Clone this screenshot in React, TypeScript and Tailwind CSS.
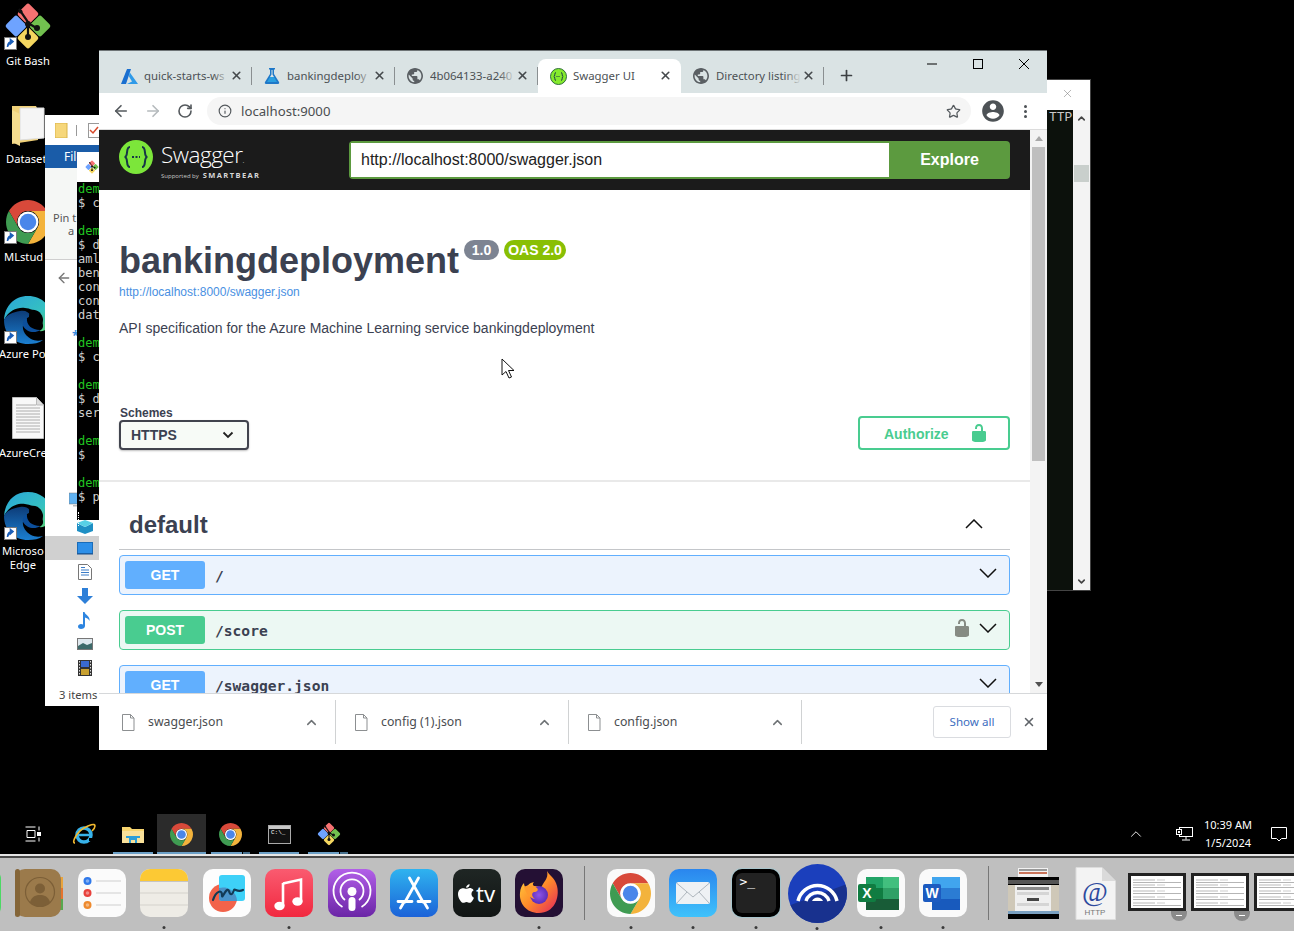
import React from "react";
import { ArrowLeft, ArrowRight, RotateCw, Info, Star, X, Plus, ChevronUp, ChevronDown } from "lucide-react";

const PUBLIC_D = "M12 2C6.48 2 2 6.48 2 12s4.48 10 10 10 10-4.48 10-10S17.52 2 12 2zm-1 17.93c-3.95-.49-7-3.85-7-7.93 0-.62.08-1.21.21-1.79L9 15v1c0 1.1.9 2 2 2v1.93zm6.9-2.54c-.26-.81-1-1.39-1.9-1.39h-1v-3c0-.55-.45-1-1-1H8v-2h2c.55 0 1-.45 1-1V7h2c1.1 0 2-.9 2-2v-.41c2.93 1.19 5 4.06 5 7.41 0 2.08-.8 3.97-2.1 5.39z";
const LOCK_D = "M15.8 8H14V5.6C14 2.703 12.665 1 10 1 7.334 1 6 2.703 6 5.6V6h2v-.801C8 3.754 8.797 3 10 3c1.203 0 2 .754 2 2.199V8H4c-.553 0-1 .646-1 1.199V17c0 .549.428 1.139.951 1.307l1.197.387C5.672 18.861 6.55 19 7.1 19h5.8c.549 0 1.428-.139 1.951-.307l1.196-.387c.524-.167.953-.757.953-1.306V9.199C17 8.646 16.352 8 15.8 8z";

function ChromeLogo({ size = 48 }: { size?: number }) {
  return (
    <svg width={size} height={size} viewBox="0 0 48 48">
      <path d="M24 12H44.78A24 24 0 0 0 3.22 12L13.6 30A12 12 0 0 1 24 12Z" fill="#d8493a" />
      <path d="M44.78 12A24 24 0 0 1 24 48L34.4 30A12 12 0 0 0 24 12Z" fill="#f3b33c" />
      <path d="M24 48A24 24 0 0 1 3.22 12L13.6 30A12 12 0 0 0 34.4 30Z" fill="#3f9b52" />
      <circle cx="24" cy="24" r="11.5" fill="#fff" />
      <circle cx="24" cy="24" r="9" fill="#4a86ea" />
    </svg>
  );
}

function GitLogo({ size = 48 }: { size?: number }) {
  return (
    <svg width={size} height={size} viewBox="0 0 48 48">
      <rect x="4" y="16" width="16" height="16" rx="2.5" transform="rotate(45 12 24)" fill="#6ea3ff" />
      <rect x="16" y="4" width="16" height="16" rx="2.5" transform="rotate(45 24 12)" fill="#f57272" />
      <rect x="28" y="16" width="16" height="16" rx="2.5" transform="rotate(45 36 24)" fill="#72c04f" />
      <rect x="16" y="28" width="16" height="16" rx="2.5" transform="rotate(45 24 36)" fill="#f4d65f" />
      <path d="M15 7L24 20L24 36M24 21L34 27" stroke="#111" strokeWidth="2.2" fill="none" />
      <circle cx="24" cy="22" r="3" fill="#111" />
      <circle cx="16.5" cy="9.5" r="2" fill="#111" />
      <circle cx="33" cy="26" r="3" fill="#111" />
      <circle cx="24" cy="35" r="3" fill="#111" />
    </svg>
  );
}

function EdgeLogo({ id }: { id: string }) {
  return (
    <svg width="48" height="48" viewBox="0 0 48 48">
      <defs>
        <linearGradient id={id + "a"} x1="0" y1="0" x2="1" y2="1">
          <stop offset="0" stopColor="#2aa5d8" />
          <stop offset="0.6" stopColor="#35c1c1" />
          <stop offset="1" stopColor="#5ed06e" />
        </linearGradient>
        <linearGradient id={id + "b"} x1="0" y1="0" x2="0" y2="1">
          <stop offset="0" stopColor="#0d3c78" />
          <stop offset="1" stopColor="#1b7fd0" />
        </linearGradient>
      </defs>
      <path d="M24 0C10 0 1 10 0 24c5-10 14-13 21-12 10 1 17 7 18 17 .4 3-1 5-4 6 6 1 13-4 13-12C48 10 38 0 24 0Z" fill={`url(#${id}a)`} />
      <path d="M0 24c0 14 10 24 24 24 6 0 11-1 15-4-4 1-8 1-12-1-7-4-10-11-7-17 1-3 4-5 7-6-2-4-6-6-11-5C9 16 2 19 0 24Z" fill={`url(#${id}b)`} />
      <path d="M27 14c6-1 11 3 12 9 .3 4-2 7-5 7-5 0-9-2-9-8 0-3 0-6 2-8Z" fill="#000" />
      <path d="M23 22c-1 7 5 12 13 12-5 4-14 2-17-4-1-3 1-7 4-8Z" fill="#0c4f9c" />
    </svg>
  );
}

function Shortcut() {
  return (
    <svg width="13" height="13" viewBox="0 0 13 13" className="absolute bottom-0 left-0">
      <rect x="0.5" y="0.5" width="12" height="12" fill="#fff" stroke="#7a7a7a" />
      <path d="M3.5 10c0-4 2-5.5 5-5.5M6.5 2.5l2.5 2-2.5 2.2z" stroke="#1c5fb8" strokeWidth="1.6" fill="#1c5fb8" />
    </svg>
  );
}

function DesktopIcon({ top, left, w, h, label, label2, labelLeft, labelTop, children }: { top: number; left: number; w: number; h: number; label: string; label2?: string; labelLeft: number; labelTop: number; children: React.ReactNode }) {
  return (
    <>
      <div className="absolute" style={{ top, left, width: w, height: h }}>{children}</div>
      <div className="absolute whitespace-nowrap text-white text-[11.2px] leading-[14px] text-center font-['Noto_Sans',sans-serif]" style={{ top: labelTop, left: labelLeft }}>
        {label}
        {label2 ? <div>{label2}</div> : null}
      </div>
    </>
  );
}

function Tab({ icon, label, active, sep = true }: { icon: React.ReactNode; label: string; active?: boolean; sep?: boolean }) {
  return (
    <div className={`relative flex h-[34px] w-[143px] shrink-0 items-center ${active ? "rounded-t-[8px] bg-white" : ""}`}>
      <div className="ml-[11px] flex h-[18px] w-[18px] items-center justify-center">{icon}</div>
      <div className="relative ml-[6px] w-[85px] overflow-hidden whitespace-nowrap text-[11.4px] text-[#4c5154] font-['Noto_Sans',sans-serif]">
        {label}
        {!active && <div className="absolute right-0 top-0 h-full w-[16px] bg-gradient-to-r from-transparent to-[#dae3e4]" />}
      </div>
      <X size={13} strokeWidth={3} className="absolute left-[121px] top-[10px] text-[#45494c]" />
      {sep && !active && <div className="absolute right-0 top-[8px] h-[18px] w-px bg-[#8a8f91]" />}
    </div>
  );
}

function OpRow({ method, path, color, bg, lock }: { method: string; path: string; color: string; bg: string; lock?: boolean }) {
  return (
    <div className={`mt-[15px] flex h-[40px] shrink-0 items-center rounded-[4px] border pl-[5px] pr-[12px] ${color} ${bg}`}>
      <div className={`flex h-[28px] w-[80px] items-center justify-center rounded-[3px] text-[14px] font-bold text-white ${method === "GET" ? "bg-[#61affe]" : "bg-[#49cc90]"}`}>{method}</div>
      <div className="ml-[10px] mt-[1px] flex-1 text-[14.6px] font-bold text-[#3b4151] font-['DejaVu_Sans_Mono',monospace]">{path}</div>
      {lock && (
        <svg width="20" height="20" viewBox="0 0 20 20" className="mr-[7px] mt-[-5px]"><path d={LOCK_D} fill="#868b83" /></svg>
      )}
      <svg width="18" height="10" viewBox="0 0 18 10" className="mt-[-5px]"><path d="M1 1l8 8 8-8" fill="none" stroke="#111" strokeWidth="1.5" /></svg>
    </div>
  );
}

function DownloadItem({ name, w }: { name: string; w: number }) {
  return (
    <div className="relative flex h-[44px] shrink-0 items-center" style={{ width: w }}>
      <svg width="14" height="17" viewBox="0 0 14 17" className="ml-[18px]">
        <path d="M1.5.5h8l3.5 3.5v12.5h-11.5z M9.5.5v3.5h3.5" fill="#fff" stroke="#8c8f91" />
      </svg>
      <div className="ml-[13px] mt-[1px] text-[12.3px] text-[#4a4d50] font-['Noto_Sans',sans-serif]">{name}</div>
      <ChevronUp size={15} strokeWidth={2.4} className="absolute left-[201px] top-[14.5px] text-[#6e7275]" />
      <div className="absolute right-0 top-0 h-full w-px bg-[#d0d2d3]" />
    </div>
  );
}

const TERM_LINES = ["dem", "$ c", "", "dem", "$ d", "aml", "ben", "con", "con", "dat", "", "dem", "$ c", "", "dem", "$ d", "ser", "", "dem", "$", "", "dem", "$ p"];

function Dot() {
  return <div className="absolute bottom-[-12px] left-1/2 h-[3px] w-[3px] -translate-x-1/2 rounded-full bg-[#3a3a3a]" />;
}

function DockIcon({ dot, children, className = "" }: { dot?: boolean; children: React.ReactNode; className?: string }) {
  return (
    <div className={`relative h-[48px] w-[48px] shrink-0 ${className}`}>
      {children}
      {dot && <Dot />}
    </div>
  );
}

function Thumb({ dash = true, w = 58 }: { dash?: boolean; w?: number }) {
  return (
    <div className="relative shrink-0" style={{ width: w }}>
      <div className="flex h-[38px] flex-col justify-between border-[3px] border-[#222] bg-white px-[2px] py-[2px]">
        {[0, 1, 2, 3, 4].map((i) => (
          <div key={i} className="flex h-[5px] items-start border-b border-[#b5b5b5]">
            <div className="mt-[1px] h-[2px] w-[22px] bg-[#dcdcdc]" />
            <div className="ml-[2px] mt-[1px] h-[2px] w-[8px] bg-[#e6e6e6]" />
          </div>
        ))}
      </div>
      {dash && (
        <div className="absolute bottom-[-10px] right-[-1px] flex h-[10px] w-[16px] items-center justify-center rounded-b-full bg-[#8a8a8a]">
          <div className="h-px w-[6px] bg-white" />
        </div>
      )}
    </div>
  );
}

function Dock() {
  return (
    <div className="flex h-[73px] items-center overflow-hidden bg-[#bfbfbf] pb-[3px]">
      <DockIcon className="ml-[-47px]"><div className="h-full w-full rounded-[10px] bg-[#4cd964]" /></DockIcon>
      <div className="ml-[14px] flex items-center gap-[14.5px]">
        <DockIcon>
          <svg width="48" height="48" viewBox="0 0 48 48">
            <rect x="40" y="8" width="8" height="11" fill="#e8a33d" /><rect x="40" y="19" width="8" height="11" fill="#e5742e" /><rect x="40" y="30" width="8" height="11" fill="#58a84f" />
            <rect width="46" height="48" rx="10" fill="#9b7a4b" />
            <rect x="0" y="0" width="5" height="48" rx="2.5" fill="#846538" />
            <circle cx="25" cy="23" r="14.5" fill="none" stroke="#7c5f37" strokeWidth="1.2" />
            <circle cx="25" cy="19.5" r="5" fill="#7c5f37" />
            <path d="M15 33c2-6 6-7 10-7s8 1 10 7c-3 3-7 4.500-10 4.500S18 36 15 33Z" fill="#7c5f37" />
          </svg>
        </DockIcon>
        <DockIcon>
          <svg width="48" height="48" viewBox="0 0 48 48">
            <rect width="48" height="48" rx="10" fill="#fbfbfb" />
            <circle cx="9.500" cy="12" r="4" fill="#2f79ea" /><circle cx="9.500" cy="24" r="4" fill="#e8413c" /><circle cx="9.500" cy="36" r="4" fill="#ee8a2e" />
            <circle cx="9.500" cy="12" r="1.800" fill="#fff" opacity=".4" /><circle cx="9.500" cy="24" r="1.800" fill="#fff" opacity=".4" /><circle cx="9.500" cy="36" r="1.800" fill="#fff" opacity=".4" />
            <path d="M18 12h25M18 24h25M18 36h25" stroke="#cfcfcf" strokeWidth="1.200" />
          </svg>
        </DockIcon>
        <DockIcon dot>
          <svg width="48" height="48" viewBox="0 0 48 48">
            <defs><clipPath id="nc"><rect width="48" height="48" rx="10" /></clipPath></defs>
            <g clipPath="url(#nc)">
              <rect width="48" height="48" fill="#eeece6" />
              <rect width="48" height="12" fill="#fcc934" />
              <rect y="12" width="48" height=".8" fill="#bbb" />
              <path d="M0 24h48M0 36h48" stroke="#d4d2cc" />
            </g>
          </svg>
        </DockIcon>
        <DockIcon>
          <svg width="48" height="48" viewBox="0 0 48 48">
            <rect width="48" height="48" rx="10" fill="#fdfdfd" />
            <circle cx="20" cy="29" r="14" fill="#f2634a" />
            <rect x="16" y="6" width="26" height="26" rx="3" fill="#3ed1f8" />
            <path d="M16 19h-0v0a14 14 0 0 1 18 13H19a3 3 0 0 1-3-3Z" fill="#4a93c9" />
            <path d="M10 31c3-9 9-11 9-5 0 6 4-9 7-4 1 4 3 5 5-1 1-2 3 3 9 0" fill="none" stroke="#123a55" strokeWidth="2.200" strokeLinecap="round" />
          </svg>
        </DockIcon>
        <DockIcon dot>
          <svg width="48" height="48" viewBox="0 0 48 48">
            <defs><linearGradient id="mg" x1="0" y1="0" x2="0" y2="1"><stop offset="0" stopColor="#fa5b70" /><stop offset="1" stopColor="#f1283f" /></linearGradient></defs>
            <rect width="48" height="48" rx="10" fill="url(#mg)" />
            <path d="M18 14.500L36 10.500V32" fill="none" stroke="#fff" strokeWidth="2.600" />
            <path d="M18 14V37" stroke="#fff" strokeWidth="2.600" />
            <ellipse cx="14.500" cy="37" rx="5.200" ry="4.200" fill="#fff" /><ellipse cx="32.500" cy="32.500" rx="5.200" ry="4.200" fill="#fff" />
          </svg>
        </DockIcon>
        <DockIcon>
          <svg width="48" height="48" viewBox="0 0 48 48">
            <defs><linearGradient id="pg" x1="0" y1="0" x2="0" y2="1"><stop offset="0" stopColor="#b25fe8" /><stop offset="1" stopColor="#6b25a6" /></linearGradient></defs>
            <rect width="48" height="48" rx="10" fill="url(#pg)" />
            <path d="M14.500 38A18.500 18.500 0 1 1 33.500 38" fill="none" stroke="#fff" strokeWidth="1.800" />
            <path d="M17 31A11.500 11.500 0 1 1 31 31" fill="none" stroke="#fff" strokeWidth="1.800" />
            <circle cx="24" cy="22.500" r="4.500" fill="#fff" />
            <rect x="20.500" y="28" width="7" height="14" rx="3.500" fill="#fff" />
          </svg>
        </DockIcon>
        <DockIcon>
          <svg width="48" height="48" viewBox="0 0 48 48">
            <defs><linearGradient id="ag" x1="0" y1="0" x2="0" y2="1"><stop offset="0" stopColor="#2fb3ef" /><stop offset="1" stopColor="#1b62d8" /></linearGradient></defs>
            <rect width="48" height="48" rx="10" fill="url(#ag)" />
            <path d="M28.500 9L15 33M19.500 9L33 33M8 32.500H22M28 32.500H40M14 33l-3.500 6M34 33l3.500 6" stroke="#fff" strokeWidth="2.800" strokeLinecap="round" />
          </svg>
        </DockIcon>
        <DockIcon>
          <div className="flex h-full w-full items-center justify-center gap-[2px] rounded-[10px] bg-[linear-gradient(#1f2624,#111514)] text-white">
            <svg width="16" height="19" viewBox="0 0 24 28"><path d="M17.500 0c.2 2.500-2.200 5.600-5.300 5.400C11.800 2.800 14.600.2 17.500 0ZM12.300 7c1.500 0 3-1.200 5.200-1.200 1.500 0 4.200.6 6 3.200-4.800 2.800-4 9.400.5 11.200-1.300 3.200-4 7.800-6.500 7.800-1.800 0-2.500-1.200-4.700-1.200s-3 1.200-4.700 1.200C5 28 0 21 0 15 0 9 3.800 6 7.400 6c2 0 3.500 1 4.900 1Z" fill="#fff" /></svg>
            <span className="text-[22px] leading-none font-['Noto_Sans',sans-serif]">tv</span>
          </div>
        </DockIcon>
        <DockIcon dot>
          <svg width="48" height="48" viewBox="0 0 48 48">
            <defs>
              <linearGradient id="fg" x1="0" y1="0" x2="1" y2="1"><stop offset="0" stopColor="#ffd83f" /><stop offset=".5" stopColor="#ff8b2a" /><stop offset="1" stopColor="#e3245c" /></linearGradient>
              <radialGradient id="fp"><stop offset="0" stopColor="#8f55e8" /><stop offset="1" stopColor="#5c2db8" /></radialGradient>
            </defs>
            <rect width="48" height="48" rx="10" fill="#241034" />
            <path d="M32 2c2 4 8 7 10 15 3 12-3 27-18 27C11 44 4 34 5 24c0-4 2-8 4-10 0 2 1 4 2 5 1-2 3-5 8-6-2 2-1 4 1 4 4 0 6 2 6 2 2-6 8-9 6-17Z" fill="url(#fg)" />
            <circle cx="24" cy="26" r="9" fill="url(#fp)" />
            <path d="M9 18c4-2 9-2 13 1 2 2 0 4-3 4-3 1-2 5 1 7-6-1-9-6-11-12Z" fill="#ff9a2e" />
          </svg>
        </DockIcon>
      </div>
      <div className="ml-[21px] h-[54px] w-px shrink-0 bg-[#777]" />
      <div className="ml-[21.500px] flex items-center">
        <DockIcon dot>
          <div className="flex h-full w-full items-center justify-center rounded-[10px] bg-[#fafafa]"><ChromeLogo size={41} /></div>
        </DockIcon>
        <DockIcon dot className="ml-[14px]">
          <svg width="48" height="48" viewBox="0 0 48 48">
            <defs><linearGradient id="mm" x1="0" y1="0" x2="0" y2="1"><stop offset="0" stopColor="#2a86ee" /><stop offset="1" stopColor="#3fc2fb" /></linearGradient></defs>
            <rect width="48" height="48" rx="10" fill="url(#mm)" />
            <rect x="7" y="13" width="34" height="22" rx="2.500" fill="#eef1f4" />
            <path d="M7.500 14L24 28 40.500 14M7.500 34.500L18 23M40.500 34.500L30 23" fill="none" stroke="#aeb6bd" strokeWidth="1" />
          </svg>
        </DockIcon>
        <DockIcon dot className="ml-[15px]">
          <div className="h-full w-full rounded-[10px] bg-black p-[4px] shadow-[0_0_0_1px_#a9c5cc]">
            <div className="h-full w-full rounded-[6px] bg-[#222] pl-[4px] pt-[1px] text-[13px] leading-[15px] text-white font-['DejaVu_Sans_Mono',monospace]">&gt;_</div>
          </div>
        </DockIcon>
        <div className="relative ml-[8px] h-[59px] w-[59px] shrink-0">
          <svg width="59" height="59" viewBox="0 0 59 59">
            <defs><clipPath id="bc"><circle cx="29.500" cy="29.500" r="29.500" /></clipPath></defs>
            <circle cx="29.500" cy="29.500" r="29.500" fill="#1b3fbc" />
            <path d="M59 20L0 42V59H59Z" fill="#18318e" clipPath="url(#bc)" />
            <path d="M10 37A20 20 0 0 1 49 37" fill="none" stroke="#fff" strokeWidth="3.500" />
            <path d="M18 37A12 12 0 0 1 41 37" fill="none" stroke="#fff" strokeWidth="3.500" />
            <path d="M24 37A6 6 0 0 1 35 37Z" fill="#fff" />
          </svg>
          <div className="absolute bottom-[-7px] left-1/2 h-[3px] w-[3px] -translate-x-1/2 rounded-full bg-[#3a3a3a]" />
        </div>
        <DockIcon dot className="ml-[10px]">
          <svg width="48" height="48" viewBox="0 0 48 48">
            <rect width="48" height="48" rx="10" fill="#fafafa" />
            <rect x="9" y="8" width="17" height="11" fill="#21a366" /><rect x="26" y="8" width="16" height="11" fill="#42bf7e" />
            <rect x="9" y="19" width="17" height="11" fill="#107c41" /><rect x="26" y="19" width="16" height="11" fill="#2fa066" />
            <rect x="9" y="30" width="33" height="11" fill="#185c37" />
            <rect x="1" y="15" width="18" height="18" rx="2" fill="#107c41" />
            <text x="10" y="29" textAnchor="middle" fontSize="14" fontWeight="700" fill="#fff" fontFamily="Liberation Sans, sans-serif">X</text>
          </svg>
        </DockIcon>
        <DockIcon dot className="ml-[14.500px]">
          <svg width="48" height="48" viewBox="0 0 48 48">
            <rect width="48" height="48" rx="10" fill="#fafafa" />
            <rect x="13" y="8" width="28" height="11" fill="#41a5ee" /><rect x="13" y="19" width="28" height="11" fill="#2b7cd3" /><rect x="13" y="30" width="28" height="11" fill="#185abd" />
            <rect x="4" y="15" width="18" height="18" rx="2" fill="#1c5bc0" />
            <text x="13" y="29" textAnchor="middle" fontSize="14" fontWeight="700" fill="#fff" fontFamily="Liberation Sans, sans-serif">W</text>
          </svg>
        </DockIcon>
      </div>
      <div className="ml-[20.500px] h-[54px] w-px shrink-0 bg-[#777]" />
      <div className="ml-[19px] flex shrink-0 flex-col items-center">
        <div className="flex h-[9px] w-[30px] flex-col gap-[1px] bg-[#f2f2f2] px-[1px] pt-[1px]">
          <div className="h-[2px] bg-[#999]" />
          <div className="h-[2px] bg-[#c9745a]" />
        </div>
        <div className="flex h-[42px] w-[51px] flex-col bg-black">
          <div className="mt-[3px] h-[4px] bg-[#555]" />
          <div className="mx-auto mt-[1px] flex h-[26px] w-[51px] items-start bg-[#cfc8b8]">
            <div className="ml-[7px] h-full w-[36px] bg-[#efefef] p-[2px]">
              <div className="h-[3px] bg-[#888]" />
              <div className="mt-[2px] h-[3px] bg-[#d5d5d5]" />
              <div className="mx-auto mt-[3px] h-[3px] w-[12px] bg-[#444]" />
              <div className="mt-[2px] h-[3px] bg-[#d5d5d5]" />
            </div>
          </div>
          <div className="h-[3px] bg-[#7aa0c0]" />
        </div>
      </div>
      <div className="relative ml-[16px] h-[53px] w-[41px] shrink-0">
        <svg width="41" height="53" viewBox="0 0 41 53">
          <path d="M1 .5h26L40.500 14v38.500H1z" fill="#f3f3f3" stroke="#dcdcdc" />
          <path d="M27 .5V14h13.500z" fill="#dadada" />
          <text x="20" y="34" textAnchor="middle" fontSize="28" fontFamily="Liberation Serif, serif" fill="#2e4a9e">@</text>
          <text x="20" y="48" textAnchor="middle" fontSize="8" fontFamily="Liberation Sans, sans-serif" fill="#777">HTTP</text>
        </svg>
      </div>
      <div className="ml-[12px] mt-[-3px] flex gap-[5px]">
        <Thumb />
        <Thumb />
        <Thumb dash={false} />
      </div>
    </div>
  );
}

export default function App() {
  return (
    <div className="relative flex h-[931px] w-[1294px] flex-col overflow-hidden bg-black font-['Liberation_Sans',Arial,sans-serif]">
      <div className="relative h-[814px] w-full shrink-0">
        {/* desktop icons */}
        <DesktopIcon top={2} left={4} w={48} h={48} label="Git Bash" labelLeft={6} labelTop={54}>
          <GitLogo />
          <Shortcut />
        </DesktopIcon>
        <DesktopIcon top={104} left={12} w={34} h={42} label="Dataset" labelLeft={6} labelTop={152}>
          <svg width="34" height="42" viewBox="0 0 34 42">
            <path d="M0 2h24l2 4h0v30L0 40z" fill="#f0d078" />
            <path d="M8 4h24v30l-24 2z" fill="#f5f5f5" stroke="#ddd" />
            <path d="M0 6L8 10v32L0 38Z" fill="#f6dd8f" />
          </svg>
        </DesktopIcon>
        <DesktopIcon top={200} left={6} w={44} h={44} label="MLstud" labelLeft={4} labelTop={250}>
          <ChromeLogo size={44} />
          <div className="absolute bottom-0 left-[-2px] h-[13px] w-[13px]"><Shortcut /></div>
        </DesktopIcon>
        <DesktopIcon top={296} left={4} w={48} h={48} label="Azure Por" labelLeft={-1} labelTop={347}>
          <EdgeLogo id="e1" />
          <Shortcut />
        </DesktopIcon>
        <DesktopIcon top={397} left={12} w={32} h={42} label="AzureCre" labelLeft={-1} labelTop={446}>
          <svg width="32" height="42" viewBox="0 0 32 42">
            <path d="M.5.500h24L31.500 8v33.500H.5z" fill="#f8f8f8" stroke="#bbb" />
            <path d="M24.500.5V8h7" fill="#ddd" stroke="#bbb" />
            <path d="M4 8h20M4 11h24M4 14h24M4 17h24M4 20h24M4 23h24M4 26h24M4 29h24M4 32h24M4 35h24" stroke="#9a9a9a" strokeWidth=".8" />
          </svg>
        </DesktopIcon>
        <DesktopIcon top={492} left={4} w={48} h={48} label="Microso" label2="Edge" labelLeft={2} labelTop={544}>
          <EdgeLogo id="e2" />
          <Shortcut />
        </DesktopIcon>

        {/* explorer window behind */}
        <div className="absolute left-[45px] top-[115px] flex h-[591px] w-[70px] flex-col bg-white font-['Noto_Sans',sans-serif]">
          <div className="flex h-[30px] shrink-0 items-center pl-[10px]">
            <svg width="13" height="15" viewBox="0 0 13 15"><path d="M0 0h12v15H0z" fill="#f6d77b" stroke="#d9b44a" /></svg>
            <div className="ml-[8px] h-[11px] w-px bg-[#999]" />
            <svg width="12" height="15" viewBox="0 0 12 15" className="ml-[11px]"><rect x=".5" y=".5" width="11" height="14" fill="#fff" stroke="#999" /><path d="M2 7l3 3 5-6" fill="none" stroke="#d8492a" strokeWidth="1.500" /></svg>
          </div>
          <div className="flex h-[23px] shrink-0 items-center bg-[#1a5ca8] pl-[19px] text-[12px] text-white">File</div>
          <div className="h-[92px] shrink-0 border-b border-[#cfcfcf] bg-[#f5f7f5] pl-[8px] pt-[43px] text-[11px] leading-[13px] text-[#555]">
            <div>Pin t</div>
            <div className="pl-[15px]">a</div>
          </div>
          <div className="flex h-[36px] shrink-0 items-center pl-[11px]"><ArrowLeft size={16} strokeWidth={2} className="text-[#777]" /></div>
          <div className="h-[192px] shrink-0 pl-[27px] pt-[30px] text-[13px] font-bold text-[#3a8de0]">*</div>
          <div className="flex h-[24px] shrink-0 items-center pl-[24px]">
            <svg width="16" height="16" viewBox="0 0 16 16"><rect x="0" y="1" width="16" height="11" fill="#5fb2f2" stroke="#777" strokeWidth=".5" /><rect x="4" y="13" width="8" height="1.500" fill="#bbb" /></svg>
          </div>
          <div className="flex h-[24px] shrink-0 items-center pl-[32px]">
            <svg width="16" height="14" viewBox="0 0 16 14" className="mt-[6px]"><path d="M0 3l8 4 8-4v8l-8 3-8-3z" fill="#1e8fc4" /><path d="M0 3l8 4 8-4-8-3z" fill="#57d0e6" /></svg>
          </div>
          <div className="flex h-[24px] shrink-0 items-center bg-[#d0d0d0] pl-[32px]">
            <svg width="16" height="13" viewBox="0 0 16 13"><rect x=".5" y=".5" width="15" height="11" fill="#2d8fe8" stroke="#1a6cb8" /><path d="M0 12h16" stroke="#1a4f8a" /></svg>
          </div>
          <div className="flex h-[24px] shrink-0 items-center pl-[33px]">
            <svg width="14" height="16" viewBox="0 0 14 16"><path d="M.5.500h9l4 4v11H.5z" fill="#fff" stroke="#777" /><path d="M3 6h8M3 8.500h8M3 11h8" stroke="#3a7cc8" /><path d="M3 3.500h4" stroke="#3a7cc8" /></svg>
          </div>
          <div className="flex h-[24px] shrink-0 items-center pl-[32px]">
            <svg width="16" height="16" viewBox="0 0 16 16"><path d="M5 0h6v8h5l-8 8-8-8h5z" fill="#2d7fd8" /></svg>
          </div>
          <div className="flex h-[24px] shrink-0 items-center pl-[33px]">
            <svg width="13" height="17" viewBox="0 0 13 17"><path d="M5 0h1.500c.5 3 6 4 5 9-1-2.500-3-3-4.500-3.500V14c0 2-2 3-4 3S0 16 0 14.500 1.500 12 3 12c.7 0 1.500.2 2 .6z" fill="#2d85e0" /></svg>
          </div>
          <div className="flex h-[24px] shrink-0 items-center pl-[32px]">
            <svg width="16" height="12" viewBox="0 0 16 12"><rect x=".5" y=".5" width="15" height="11" fill="#dfe8ee" stroke="#777" /><path d="M1 8l5-3 4 2 5-2v6H1z" fill="#3d6a6a" /></svg>
          </div>
          <div className="flex h-[24px] shrink-0 items-center pl-[33px]">
            <svg width="14" height="16" viewBox="0 0 14 16"><rect width="14" height="16" fill="#333" /><rect x="3" y="1" width="8" height="6" fill="#3a6ad0" /><rect x="3" y="9" width="8" height="6" fill="#c8a030" /><path d="M1.500 1v14M12.500 1v14" stroke="#ddd" strokeDasharray="1.500 1.500" /></svg>
          </div>
          <div className="mt-[4px] flex h-[22px] items-center pl-[14px] text-[11.2px] text-[#444] whitespace-nowrap">3 items</div>
        </div>

        {/* terminal window behind */}
        <div className="absolute left-[77px] top-[152px] flex h-[368px] w-[40px] flex-col bg-black">
          <div className="flex h-[30px] shrink-0 items-center bg-white pl-[8px]"><GitLogo size={14} /></div>
          <div className="pl-[1px] text-[12px] leading-[14px] text-[#cfcfcf] font-['DejaVu_Sans_Mono',monospace]">
            {TERM_LINES.map((l, i) => (
              <div key={i} className={`h-[14px] whitespace-pre ${l === "dem" ? "text-[#21c421]" : ""}`}>{l}</div>
            ))}
            <div className="mt-[8px] h-[14px] w-px border-l border-dotted border-white" />
          </div>
        </div>

        {/* right window behind */}
        <div className="absolute left-[1040px] top-[79px] flex h-[512px] w-[51px] flex-col border border-[#444] bg-white">
          <div className="relative h-[30px] shrink-0">
            <X size={13} strokeWidth={1} className="absolute left-[20px] top-[7px] text-[#777]" />
          </div>
          <div className="flex flex-1">
            <div className="w-[32px] bg-[#0c110c] pl-[8px] text-[13px] leading-[14px] pt-[1px] text-[#c8c8c8] font-['Liberation_Mono',monospace]">TTP</div>
            <div className="flex flex-1 flex-col items-center justify-between bg-[#f3f3f3] py-[3px]">
              <ChevronUp size={11} strokeWidth={3.500} className="text-[#444]" />
              <div className="absolute left-[33px] top-[85px] h-[17px] w-[15px] bg-[#c9cfcc]" />
              <ChevronDown size={11} strokeWidth={3.500} className="text-[#444]" />
            </div>
          </div>
        </div>

        {/* Chrome window */}
        <div className="absolute left-[99px] top-[50px] flex h-[700px] w-[948px] flex-col border-t border-[#6e7476] bg-white">
          {/* tab strip */}
          <div className="relative flex h-[42px] shrink-0 items-end bg-[#dae3e4] pl-[10px]">
            <Tab
              label="quick-starts-ws"
              icon={
                <svg width="17" height="15" viewBox="0 0 17 15"><path d="M6 0h4L5 15H0z" fill="#1a6fd0" /><path d="M8.500 3L17 15H6l5-2.500L8 7.500z" fill="#2f9ae8" /></svg>
              }
            />
            <Tab
              label="bankingdeploy"
              icon={
                <svg width="16" height="16" viewBox="0 0 16 16"><path d="M5 0h6v1.500h-1V6l5 8c.5 1 0 2-1 2H2c-1 0-1.500-1-1-2l5-8V1.500H5z" fill="#1f78c8" /><path d="M7.500 2h1v4.500L10 9H6l1.500-2.500z" fill="#dae3e4" /><path d="M3 14l3-5h4l3 5z" fill="#2a9fe0" /></svg>
              }
            />
            <Tab label="4b064133-a240" icon={<svg width="16" height="16" viewBox="2 2 20 20"><path d={PUBLIC_D} fill="#5a5f63" /></svg>} />
            <Tab
              active
              label="Swagger UI"
              icon={
                <svg width="17" height="17" viewBox="0 0 17 17"><circle cx="8.500" cy="8.500" r="8" fill="#85ea2d" stroke="#2f6d3a" strokeWidth="1" /><path d="M6 4.500C4 4.500 5.500 8.500 3.800 8.500 5.500 8.500 4 12.500 6 12.500M11 4.500C13 4.500 11.500 8.500 13.200 8.500 11.500 8.500 13 12.500 11 12.500" fill="none" stroke="#173647" strokeWidth="1" /><path d="M6.500 8.500h4" stroke="#173647" strokeDasharray="1 1" /></svg>
              }
            />
            <Tab label="Directory listing" icon={<svg width="16" height="16" viewBox="2 2 20 20"><path d={PUBLIC_D} fill="#5a5f63" /></svg>} />
            <Plus size={17} strokeWidth={2.400} className="mb-[9px] ml-[14px] text-[#3c4043]" />
            <div className="ml-auto mb-[22px] mr-[16px] flex items-center gap-[32px] text-black">
              <svg width="14" height="14" viewBox="0 0 14 14"><path d="M2 7h10" stroke="#000" strokeWidth="1" /></svg>
              <svg width="14" height="14" viewBox="0 0 14 14"><rect x="2.500" y="2.500" width="9" height="9" fill="none" stroke="#000" /></svg>
              <svg width="14" height="14" viewBox="0 0 14 14"><path d="M2 2l10 10M12 2L2 12" stroke="#000" /></svg>
            </div>
          </div>
          {/* toolbar */}
          <div className="flex h-[37px] shrink-0 items-center border-b border-[#dcdcdc] bg-white">
            <ArrowLeft size={18} strokeWidth={2.200} className="ml-[13px] text-[#54595d]" />
            <ArrowRight size={18} strokeWidth={2.200} className="ml-[14px] text-[#b5babd]" />
            <RotateCw size={16} strokeWidth={2.400} className="ml-[15px] text-[#54595d]" />
            <div className="ml-[14px] flex h-[28px] w-[764px] items-center rounded-full bg-[#f5f5f5] pl-[11px] pr-[10px]">
              <Info size={14} strokeWidth={2} className="text-[#54595d]" />
              <div className="ml-[9px] mt-[1px] flex-1 text-[13.2px] text-[#4a4d50] font-['Noto_Sans',sans-serif]">localhost:9000</div>
              <Star size={15} strokeWidth={2} className="text-[#54595d]" />
            </div>
            <svg width="26" height="26" viewBox="0 0 24 24" className="ml-[9px]"><path d="M12 2C6.48 2 2 6.48 2 12s4.48 10 10 10 10-4.48 10-10S17.52 2 12 2zm0 3c1.66 0 3 1.34 3 3s-1.34 3-3 3-3-1.34-3-3 1.34-3 3-3zm0 14.2c-2.500 0-4.710-1.280-6-3.220.03-1.990 4-3.080 6-3.080 1.990 0 5.970 1.090 6 3.080-1.290 1.940-3.500 3.220-6 3.220z" fill="#4d5256" /></svg>
            <div className="ml-[18px] flex flex-col gap-[2px]">
              <div className="h-[3px] w-[3px] rounded-full bg-[#4d5256]" />
              <div className="h-[3px] w-[3px] rounded-full bg-[#4d5256]" />
              <div className="h-[3px] w-[3px] rounded-full bg-[#4d5256]" />
            </div>
          </div>
          {/* page */}
          <div className="flex min-h-0 flex-1">
            <div className="flex w-[931px] shrink-0 flex-col overflow-hidden">
              <div className="flex h-[60px] shrink-0 items-center bg-[#1b1b1b] px-[20px]">
                <div className="mb-[6px] flex h-[34px] w-[34px] shrink-0 items-center justify-center rounded-full bg-[#7ce63a]">
                  <svg width="26" height="22" viewBox="0 0 26 22"><path d="M7 1C2 1 6 11 1.500 11 6 11 2 21 7 21M19 1C24 1 20 11 24.500 11 20 11 24 21 19 21" fill="none" stroke="#173647" strokeWidth="2" /><path d="M9 11h8" stroke="#173647" strokeWidth="2" strokeDasharray="2 1.500" /></svg>
                </div>
                <div className="ml-[8px] flex w-[188px] shrink-0 flex-col text-white font-['Open_Sans',sans-serif]">
                  <div className="h-[31px] text-[22.500px] font-light leading-[30px] tracking-[-0.5px]">Swagger<span className="text-[8px]">.</span></div>
                  <div className="flex items-baseline whitespace-nowrap leading-[9px]">
                    <span className="text-[6px] text-[#c8c8c8]">Supported by</span>
                    <span className="ml-[4px] text-[7.500px] font-bold tracking-[1.400px] text-[#d8d8d8]">SMARTBEAR</span>
                  </div>
                </div>
                <div className="flex h-[38px] flex-1 overflow-hidden rounded-[4px] bg-[#5c9a3f]">
                  <div className="m-[2px] mr-0 flex w-[538px] items-center bg-white pl-[10px] text-[16px] text-[#222]">http://localhost:8000/swagger.json</div>
                  <div className="flex flex-1 items-center justify-center text-[16px] font-bold text-white">Explore</div>
                </div>
              </div>

              <div className="shrink-0 px-[20px]">
                <div className="mt-[51px] flex items-start">
                  <h1 className="text-[36px] font-bold leading-[40px] text-[#3b4151]">bankingdeployment</h1>
                  <div className="ml-[5px] mt-[-1px] flex h-[20px] w-[35px] items-center justify-center rounded-full bg-[#7d8492] text-[14px] font-bold text-white">1.0</div>
                  <div className="ml-[5px] mt-[-1px] flex h-[20px] w-[62px] items-center justify-center rounded-full bg-[#89bf04] text-[14px] font-bold text-white">OAS 2.0</div>
                </div>
                <div className="mt-[3px] h-[16px] text-[12px] leading-[16px] text-[#4990e2]">http://localhost:8000/swagger.json</div>
                <div className="mt-[18px] h-[20px] text-[14px] leading-[20px] text-[#3b4151]">API specification for the Azure Machine Learning service bankingdeployment</div>
                <div className="mt-[68px] flex items-end justify-between">
                  <div>
                    <div className="ml-[1px] h-[14px] text-[12px] font-bold leading-[14px] text-[#3b4151]">Schemes</div>
                    <div className="flex h-[30px] w-[130px] items-center justify-between rounded-[4px] border-2 border-[#41444e] bg-[#f7fbf7] pl-[10px] pr-[13px] text-[14px] font-bold text-[#3b4151] shadow-[0_1px_2px_rgba(0,0,0,0.25)]">
                      HTTPS
                      <svg width="12" height="8" viewBox="0 0 12 8"><path d="M1.500 1.500L6 6l4.500-4.500" fill="none" stroke="#222" strokeWidth="1.800" /></svg>
                    </div>
                  </div>
                  <div className="flex h-[34px] w-[152px] items-center rounded-[4px] border-2 border-[#49cc90] pl-[24px] text-[14px] font-bold text-[#49cc90]">
                    <span className="mt-[2px]">Authorize</span>
                    <svg width="20" height="20" viewBox="0 0 20 20" className="ml-[20px]"><path d={LOCK_D} fill="#49cc90" /></svg>
                  </div>
                </div>
              </div>
              <div className="mt-[30px] h-[2px] shrink-0 bg-[#e9e9e9]" />
              <div className="flex shrink-0 flex-col px-[20px]">
                <div className="mt-[23px] flex h-[45px] shrink-0 items-center justify-between border-b border-[#c4c6c9] pb-[5px] pl-[10px] pr-[27px]">
                  <div className="text-[24px] font-bold text-[#3b4151]">default</div>
                  <svg width="18" height="10" viewBox="0 0 18 10" className="mb-[2px]"><path d="M1 9l8-8 8 8" fill="none" stroke="#111" strokeWidth="1.500" /></svg>
                </div>
                <div className="mt-[-10px] flex flex-col">
                  <OpRow method="GET" path="/" color="border-[#61affe]" bg="bg-[#ecf3fd]" />
                  <OpRow method="POST" path="/score" color="border-[#49cc90]" bg="bg-[#ecf8f3]" lock />
                  <OpRow method="GET" path="/swagger.json" color="border-[#61affe]" bg="bg-[#ecf3fd]" />
                </div>
              </div>
            </div>
            <div className="relative flex flex-1 flex-col items-center bg-[#f3f3f3]">
              <div className="mt-[6px] h-0 w-0 border-x-[4px] border-b-[5px] border-x-transparent border-b-[#a8a8a8]" />
              <div className="mt-[6px] h-[314px] w-[13px] bg-[#bfbfbf]" />
              <div className="absolute bottom-[6px] h-0 w-0 border-x-[4px] border-t-[5px] border-x-transparent border-t-[#505050]" />
            </div>
          </div>
          {/* downloads */}
          <div className="flex h-[57px] shrink-0 items-center border-t border-[#d6d8da] bg-white pl-[4px]">
            <DownloadItem name="swagger.json" w={233} />
            <DownloadItem name="config (1).json" w={233} />
            <DownloadItem name="config.json" w={233} />
            <div className="ml-auto flex h-[32px] w-[78px] items-center justify-center rounded-[3px] border border-[#dadce0] text-[11.6px] text-[#3d6ec0] font-['Noto_Sans',sans-serif]">Show all</div>
            <X size={14} strokeWidth={2.600} className="ml-[11px] mr-[11px] text-[#5f6368]" />
          </div>
        </div>

        {/* mouse pointer */}
        <svg width="15" height="22" viewBox="0 0 15 22" className="absolute left-[501px] top-[358px]">
          <path d="M1 1v16l4-3.500 3 6.500 2.500-1-3-6.500H13z" fill="#fff" stroke="#111" strokeWidth="1" />
        </svg>
      </div>

      {/* taskbar */}
      <div className="flex h-[40px] shrink-0 items-center bg-black">
        <div className="ml-[9px] flex h-full w-[48px] items-center justify-center">
          <svg width="16" height="16" viewBox="0 0 16 16" fill="none" stroke="#fff"><path d="M.5 1h10M.5 15h10M2 4.500h8v7H2z" /><path d="M14 .5v4M14 11.500v4" /><rect x="12.500" y="6.500" width="3" height="3" fill="#fff" /></svg>
        </div>
        <div className="ml-[2px] flex h-full w-[49px] items-center justify-center">
          <svg width="24" height="24" viewBox="0 0 24 24">
            <circle cx="12" cy="13" r="7" fill="none" stroke="#37b2ea" strokeWidth="3.500" />
            <path d="M6 13h13" stroke="#37b2ea" strokeWidth="2.500" />
            <path d="M17 16h4v3h-4z" fill="#000" />
            <path d="M3 21C-1 21 5 10 12 6c5-3 11-5 11-2 0 2-2 4-3 5" fill="none" stroke="#f2b92f" strokeWidth="1.600" />
          </svg>
        </div>
        <div className="relative flex h-full w-[49px] items-center justify-center">
          <svg width="22" height="18" viewBox="0 0 22 18"><path d="M0 2h8l2 2h12v14H0z" fill="#f7d56f" /><path d="M0 6h22v12H0z" fill="#f9e19a" /><path d="M7 18v-5h8v5h-2v-3H9v3z" fill="#2c9ed8" /><rect x="4" y="11" width="14" height="2" fill="#2c9ed8" /></svg>
          <div className="absolute bottom-0 left-[5px] h-[2px] w-[40px] bg-[#6b9fc6]" />
        </div>
        <div className="relative flex h-full w-[49px] items-center justify-center bg-[#2b2b2b]">
          <ChromeLogo size={23} />
          <div className="absolute bottom-0 left-0 h-[2px] w-[49px] bg-[#6b9fc6]" />
        </div>
        <div className="relative flex h-full w-[49px] items-center justify-center">
          <ChromeLogo size={23} />
          <div className="absolute bottom-0 left-[5px] h-[2px] w-[31px] bg-[#6b9fc6]" />
          <div className="absolute bottom-0 left-[37px] h-[2px] w-[7px] bg-[#46708e]" />
        </div>
        <div className="relative flex h-full w-[49px] items-center justify-center">
          <div className="h-[19px] w-[23px] border border-[#aaa] bg-[#111]">
            <div className="h-[3px] bg-[#c8c8c8]" />
            <div className="pl-[2px] pt-[1px] text-[6px] leading-[6px] text-white font-['Liberation_Mono',monospace]">C:\_</div>
          </div>
          <div className="absolute bottom-0 left-[4px] h-[2px] w-[40px] bg-[#6b9fc6]" />
        </div>
        <div className="relative flex h-full w-[49px] items-center justify-center">
          <GitLogo size={24} />
          <div className="absolute bottom-0 left-[4px] h-[2px] w-[31px] bg-[#6b9fc6]" />
          <div className="absolute bottom-0 left-[36px] h-[2px] w-[8px] bg-[#46708e]" />
        </div>
        <div className="ml-auto flex h-full items-center text-white">
          <ChevronUp size={18} strokeWidth={1.200} className="mr-[31px] ml-[-1px]" />
          <svg width="17" height="14" viewBox="0 0 17 14" fill="none" stroke="#fff"><rect x="3.500" y=".5" width="13" height="9" /><path d="M10 9.500v3M6 13h8" /><rect x=".5" y="2.500" width="5" height="5" fill="#000" /><rect x="2" y="4" width="2" height="2" fill="#fff" stroke="none" /></svg>
          <div className="flex w-[70px] flex-col items-center text-[11px] leading-[18px] font-['Noto_Sans',sans-serif]">
            <div>10:39 AM</div>
            <div>1/5/2024</div>
          </div>
          <div className="flex w-[31px] justify-center pl-[1px]">
            <svg width="16" height="15" viewBox="0 0 16 15" fill="none" stroke="#fff"><path d="M.5.5h15v11h-5l-2.500 2.500-2.500-2.500h-5z" /></svg>
          </div>
        </div>
      </div>

      {/* dock edge */}
      <div className="h-[2px] shrink-0 bg-[#e6e6e6]" />
      <div className="h-[2px] shrink-0 bg-[#4a4a4a]" />
      <Dock />
    </div>
  );
}
